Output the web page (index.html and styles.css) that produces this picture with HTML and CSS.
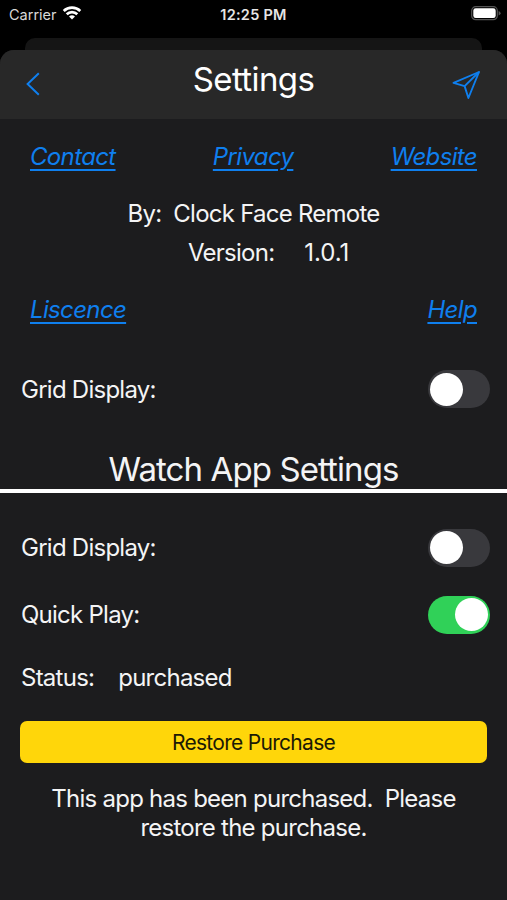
FILE: index.html
```html
<!DOCTYPE html>
<html lang="en">
  <head>
    <meta charset="UTF-8" />
    <title>Settings</title>
    <link rel="stylesheet" href="styles.css">
  </head>
  <body>
    <div class="status-bar">
      <div class="carrier">
        <span>Carrier</span>
        <svg width="20" height="15" viewBox="0 0 20 15" fill="none" stroke="#fff" stroke-width="2.7">
          <path d="M1.7 6a12 12 0 0 1 16.600 0" />
          <path d="M4.7 9.300a7.600 7.600 0 0 1 10.600 0" />
          <path d="M10 14.600l-3-3a4.300 4.300 0 0 1 6 0z" fill="#fff" stroke="none" />
        </svg>
      </div>
      <time class="clock">12:25 PM</time>
      <svg class="battery" width="30" height="15" viewBox="0 0 30 15">
        <rect x="0.700" y="0.700" width="25.600" height="13" rx="4" fill="none" stroke="#555" stroke-width="1.200" />
        <rect x="2.300" y="2.300" width="22.400" height="9.800" rx="2.400" fill="#fff" />
        <path d="M27.600 5v4.500q2-.7 2-2.250T27.600 5z" fill="#555" />
      </svg>
    </div>
    <div class="sheet-behind"></div>

    <main class="sheet">
      <header class="header">
        <button class="icon-btn back" aria-label="Back">
          <svg width="14" height="24" viewBox="0 0 14 24" fill="none" stroke="#0f7fee" stroke-width="2">
            <path d="M12.800 1.200L1.600 12l11.200 10.800" />
          </svg>
        </button>
        <h1>Settings</h1>
        <button class="icon-btn" aria-label="Send">
          <svg width="30" height="30" viewBox="0 0 30 30" fill="none" stroke="#0f7fee" stroke-width="1.900" stroke-linejoin="round">
            <path d="M28 2L2.500 12.800l11.100 3.300L17.400 28z" />
            <path d="M28 2L13.600 16.100" />
          </svg>
        </button>
      </header>

      <nav class="links">
        <a href="#">Contact</a>
        <a href="#">Privacy</a>
        <a href="#">Website</a>
      </nav>

      <p class="author">By:&nbsp; Clock Face Remote</p>
      <p class="version"><span>Version:</span><span class="number">1.0.1</span></p>

      <nav class="links links-bottom">
        <a href="#">Liscence</a>
        <a href="#">Help</a>
      </nav>

      <div class="row row-phone">
        <span>Grid Display:</span>
        <span class="toggle"></span>
      </div>

      <h2>Watch App Settings</h2>

      <div class="row">
        <span>Grid Display:</span>
        <span class="toggle"></span>
      </div>
      <div class="row">
        <span>Quick Play:</span>
        <span class="toggle on"></span>
      </div>
      <div class="row row-status">
        <span>Status:</span>
        <span>purchased</span>
      </div>

      <button class="restore">Restore Purchase</button>
      <p class="message">This app has been purchased.&nbsp; Please<br>restore the purchase.</p>
    </main>
  </body>
</html>
```
FILE: styles.css
```css
:root {
  font-family: Inter, "Liberation Sans", sans-serif;
  --blue: #0f7fee;
  --bg: #1c1c1e;
}
* {
  box-sizing: border-box;
}
body {
  height: 900px;
  margin: 0;
  overflow: hidden;
  background: #000;
  color: #f4f4f5;
  font-size: 24px;
  letter-spacing: -0.75px;
}
h1, h2, p {
  margin: 0;
  font-weight: 400;
}
button {
  padding: 0;
  border: none;
  font: inherit;
  letter-spacing: inherit;
}
.status-bar {
  display: grid;
  grid-template-columns: 1fr auto 1fr;
  align-items: center;
  height: 38px;
  padding: 0 6px 10px 9px;
  font-size: 14.5px;
  letter-spacing: 0;
}
.carrier {
  display: flex;
  align-items: center;
  gap: 5px;
  color: #d8d8d8;
}
.carrier svg {
  margin-top: -3px;
}
.clock {
  margin-right: 3px;
  font-weight: 600;
  letter-spacing: 0.25px;
  color: #e6e6e6;
}
.battery {
  justify-self: end;
  margin-top: -1px;
}
/* edge of the previous sheet peeking out */
.sheet-behind {
  height: 12px;
  margin: 0 25px;
  border-radius: 10px 10px 0 0;
  background: #151515;
}
.sheet {
  display: flex;
  flex-direction: column;
  height: 850px;
  border-radius: 14px 14px 0 0;
  overflow: hidden;
  background: var(--bg);
}
.header {
  display: flex;
  align-items: center;
  justify-content: space-between;
  height: 69px;
  padding: 0 26px;
  background: #282828;
}
.header h1 {
  padding-bottom: 11px;
  font-size: 33px;
  letter-spacing: -0.6px;
  color: #fff;
}
.icon-btn {
  display: flex;
  width: 30px;
  background: none;
}
.back {
  padding-bottom: 1px;
}
.links {
  display: flex;
  align-items: center;
  justify-content: space-between;
  height: 76px;
  padding: 0 30px 2px;
}
.links a {
  color: var(--blue);
  font-style: italic;
  letter-spacing: -0.65px;
  text-decoration-thickness: 2px;
  text-underline-offset: 4px;
}
.links-bottom {
  height: 74px;
}
.author {
  text-align: center;
  line-height: 38px;
}
.version {
  display: flex;
  gap: 30px;
  padding-left: 188px;
  line-height: 40px;
}
.version .number {
  letter-spacing: -0.1px;
}
.row {
  display: flex;
  align-items: center;
  justify-content: space-between;
  height: 67px;
  padding: 0 17px 0 21px;
}
.row-phone {
  height: 84px;
}
.row-status {
  justify-content: flex-start;
  gap: 24px;
  height: 60px;
  padding-bottom: 2px;
}
h2 {
  height: 62px;
  margin-bottom: 21px;
  padding-top: 18px;
  border-bottom: 4px solid #fff;
  font-size: 33px;
  line-height: 40px;
  letter-spacing: -0.9px;
  text-align: center;
}
.toggle {
  display: flex;
  align-items: center;
  width: 62px;
  height: 38px;
  padding: 0 2px;
  border-radius: 19px;
  background: #39393d;
}
.toggle::before {
  content: "";
  width: 33px;
  height: 33px;
  border-radius: 50%;
  background: #fff;
}
.toggle.on {
  justify-content: flex-end;
  background: #30d158;
}
.restore {
  height: 42px;
  margin: 13px 20px 0;
  border-radius: 7px;
  background: #ffd60a;
  color: #1c1a05;
  font-size: 21px;
  letter-spacing: -0.7px;
}
.message {
  padding-top: 21px;
  line-height: 29px;
  text-align: center;
}
```
